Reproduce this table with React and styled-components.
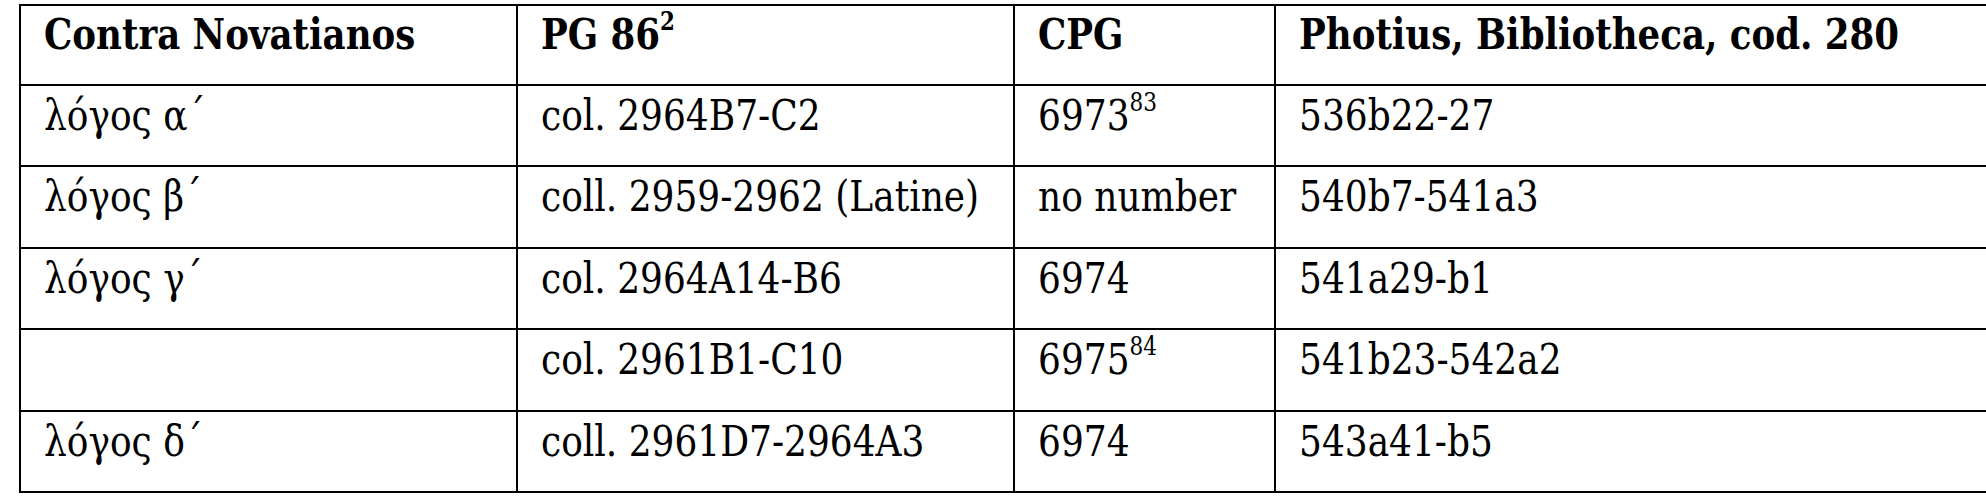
import React from "react";
import styled, { createGlobalStyle } from "styled-components";

const Global = createGlobalStyle`
  html, body { margin: 0; padding: 0; background: #fff; }
  body { overflow: hidden; }
`;

const Page = styled.div`
  width: 1986px;
  height: 497px;
  overflow: hidden;
  box-sizing: border-box;
  padding: 4px 0 0 19px;
  background: #fff;
`;

const Table = styled.table`
  border-collapse: collapse;
  table-layout: fixed;
  width: 2040px;
  font-family: "DejaVu Serif", "Liberation Serif", serif;
  font-stretch: condensed;
  color: #000;
`;

const Col = styled.col`
  width: ${(p) => p.$w}px;
`;

const Cell = styled.td`
  border: 2px solid #000;
  vertical-align: top;
  text-align: left;
  height: ${(p) => (p.$head ? "80px" : "81.4px")};
  box-sizing: border-box;
  padding: ${(p) => (p.$head ? "3px 22px 0 23px" : "4px 22px 0 23px")};
  font-size: 43px;
  font-weight: ${(p) => (p.$head ? 700 : 400)};
  line-height: 1.164;
  white-space: nowrap;
`;

const Text = styled.span`
  display: inline-block;
  transform: scaleX(${(p) => (p.$head ? 0.92 : 0.93)});
  transform-origin: left top;
`;

const Sup = styled.sup`
  font-size: 0.6em;
  line-height: 0;
  vertical-align: 0.75em;
`;

const rows = [
  ["λόγος α΄", "col. 2964B7-C2", ["6973", "83"], "536b22-27"],
  ["λόγος β΄", "coll. 2959-2962 (Latine)", ["no number"], "540b7-541a3"],
  ["λόγος γ΄", "col. 2964A14-B6", ["6974"], "541a29-b1"],
  ["", "col. 2961B1-C10", ["6975", "84"], "541b23-542a2"],
  ["λόγος δ΄", "coll. 2961D7-2964A3", ["6974"], "543a41-b5"],
];

export default function App() {
  return (
    <Page>
      <Global />
      <Table>
        <colgroup>
          <Col $w={497} />
          <Col $w={497} />
          <Col $w={261} />
          <Col $w={785} />
        </colgroup>
        <thead>
          <tr>
            <Cell as="th" $head>
              <Text $head>Contra Novatianos</Text>
            </Cell>
            <Cell as="th" $head>
              <Text $head>
                PG 86<Sup>2</Sup>
              </Text>
            </Cell>
            <Cell as="th" $head>
              <Text $head>CPG</Text>
            </Cell>
            <Cell as="th" $head>
              <Text $head>Photius, Bibliotheca, cod. 280</Text>
            </Cell>
          </tr>
        </thead>
        <tbody>
          {rows.map((r, i) => (
            <tr key={i}>
              <Cell>{r[0] && <Text>{r[0]}</Text>}</Cell>
              <Cell>
                <Text>{r[1]}</Text>
              </Cell>
              <Cell>
                <Text>
                  {r[2][0]}
                  {r[2][1] && <Sup>{r[2][1]}</Sup>}
                </Text>
              </Cell>
              <Cell>
                <Text>{r[3]}</Text>
              </Cell>
            </tr>
          ))}
        </tbody>
      </Table>
    </Page>
  );
}
